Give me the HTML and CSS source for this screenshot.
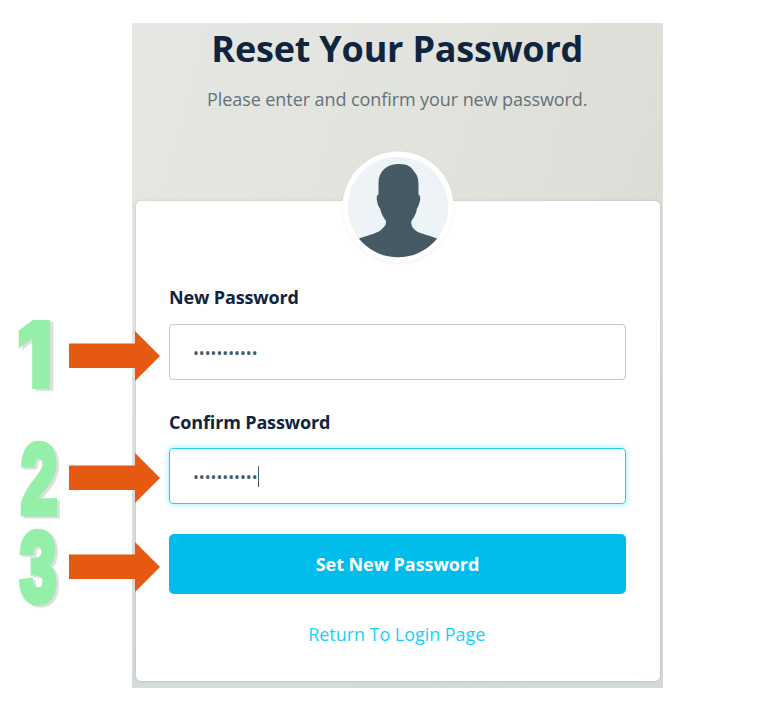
FILE: index.html
```
<!DOCTYPE html>
<html lang="en">
<head>
<meta charset="utf-8">
<title>Reset Your Password</title>
<link rel="stylesheet" href="styles.css">
</head>
<body>
<main class="panel">
  <header class="intro">
    <h1 class="title">Reset Your Password</h1>
    <p class="subtitle">Please enter and confirm your new password.</p>
  </header>
  <form class="card">
    <svg class="avatar" viewBox="0 0 112 112">
      <defs><clipPath id="disc"><circle cx="56" cy="56" r="50.3"/></clipPath></defs>
      <circle cx="56" cy="56" r="55.5" fill="#fff"/>
      <g clip-path="url(#disc)">
        <rect width="112" height="112" fill="#eef3f8"/>
        <path fill="#465a65" d="M57 13C66 13 70 16.500 72 20.500C75.500 24 76.500 28 76.500 34V43.500C79 45 78.500 49 77 53C76 57 75 56 74.500 60C73 66 70 68 69.200 71C69 75 71 78 75 80.500C80 83 88 84.500 96 88V112H16V88C24 84.500 34 83 39 79C42 76 44.500 74 44 70C41 66 39 62 38.300 58C36.500 56 35.500 53 35 50C34.500 47 34.500 44 36.500 43.500V32C36.500 20 45 13 57 13Z"/>
      </g>
    </svg>
    <div class="label">New Password</div>
    <div class="field"><span class="dots">•••••••••••</span></div>
    <div class="label label-second">Confirm Password</div>
    <div class="field focused"><span class="dots">•••••••••••</span><span class="caret"></span></div>
    <button class="submit" type="button">Set New Password</button>
    <a class="return">Return To Login Page</a>
  </form>
</main>
<div class="note note-one"><svg class="arrow" viewBox="0 0 92 50"><path d="M0 12.500H66V0L91 25L66 50V37H0Z"/></svg></div>
<div class="note note-two"><svg class="arrow" viewBox="0 0 92 50"><path d="M0 12.500H66V0L91 25L66 50V37H0Z"/></svg></div>
<div class="note note-three"><svg class="arrow" viewBox="0 0 92 50"><path d="M0 12.500H66V0L91 25L66 50V37H0Z"/></svg></div>
<span class="digit digit-one">1</span>
<span class="digit digit-two">2</span>
<span class="digit digit-three">3</span>
</body>
</html>
```
FILE: styles.css
```
* { box-sizing: border-box; }
body {
  margin: 0;
  padding: 23px 0 0 132px;
  height: 709px;
  overflow: hidden;
  background: #fff;
  font-family: "Open Sans", sans-serif;
}
.panel {
  width: 531px;
  height: 665px;
  padding: 0 3.5px 0 4px;
  background:
    repeating-linear-gradient(91deg, rgba(255,255,255,.02) 0 2px, transparent 3px 7px),
    linear-gradient(to bottom, transparent 45%, rgba(208,215,220,.75) 95%),
    linear-gradient(105deg, #e5e7e3 0%, #e1e2dc 50%, #dadad5 100%);
}
.intro { height: 177.500px; text-align: center; }
.title {
  margin: 0 1px 0 0;
  padding-top: 1px;
  font-size: 36px;
  line-height: 50px;
  font-weight: 700;
  letter-spacing: -.2px;
  color: #10243e;
}
.subtitle {
  margin: 13px 0 0;
  font-size: 18px;
  line-height: 24px;
  letter-spacing: -.08px;
  text-indent: -1px;
  color: #64727a;
}
.card {
  position: relative;
  height: 480.500px;
  padding: 84.500px 33px 0;
  border-radius: 5px;
  background: #fff;
  box-shadow: 0 0 3px rgba(0,0,0,.16);
}
.avatar {
  position: absolute;
  left: 205.500px;
  top: -49.500px;
  width: 112px;
  height: 112px;
  filter: drop-shadow(0 1px 1px rgba(0,0,0,.06));
}
.label {
  height: 39px;
  font-size: 18px;
  line-height: 24px;
  font-weight: 700;
  letter-spacing: -.15px;
  color: #10243e;
}
.label-second { margin-top: 30px; }
.field {
  display: flex;
  align-items: center;
  width: 457px;
  height: 56px;
  padding-left: 23px;
  border: 1px solid #c2c7ca;
  border-radius: 4px;
}
.label-second + .field { margin-top: -1px; }
.focused { border: 1.5px solid #20ceee; box-shadow: 0 0 7px rgba(0,204,255,.4); }
.dots { padding-top: 1px; font-size: 15.600px; line-height: 20px; color: #465a65; }
.caret { width: 1px; height: 21px; background: #465a65; }
.submit {
  display: block;
  width: 457px;
  height: 60px;
  margin: 30px 0 0;
  padding: 0;
  border: 0;
  border-radius: 5px;
  background: #00bdeb;
  color: #fff;
  font: 700 18px/60px "Open Sans", sans-serif;
  letter-spacing: -.07px;
}
.return {
  display: block;
  margin: 28px 2px 0 0;
  text-align: center;
  font-size: 18px;
  line-height: 24px;
  letter-spacing: -.05px;
  color: #18cffb;
}
.note { position: absolute; left: 69.200px; width: 92px; height: 50px; }
.note-one { top: 330.500px; }
.note-two { top: 452.500px; }
.note-three { top: 542px; }
.arrow { display: block; width: 92px; height: 50px; fill: #e65911; }
.digit {
  position: absolute;
  left: 16px;
  height: 62px;
  font: 700 96px/62px "Liberation Sans", sans-serif;
  color: #94efa8;
  -webkit-text-stroke: 7px #94efa8;
  filter: drop-shadow(4px 2px 0 #dedede);
  transform-origin: 0 50%;
}
.digit-one {
  top: 324px;
  font: 900 100px/62px Inter, sans-serif;
  -webkit-text-stroke: 2px #94efa8;
  transform: scale(.82, .92);
}
.digit-two { top: 447.500px; left: 20.500px; transform: scale(.68, 1.02); }
.digit-three { top: 535.500px; left: 19.500px; transform: scale(.68, 1.02); }
```
